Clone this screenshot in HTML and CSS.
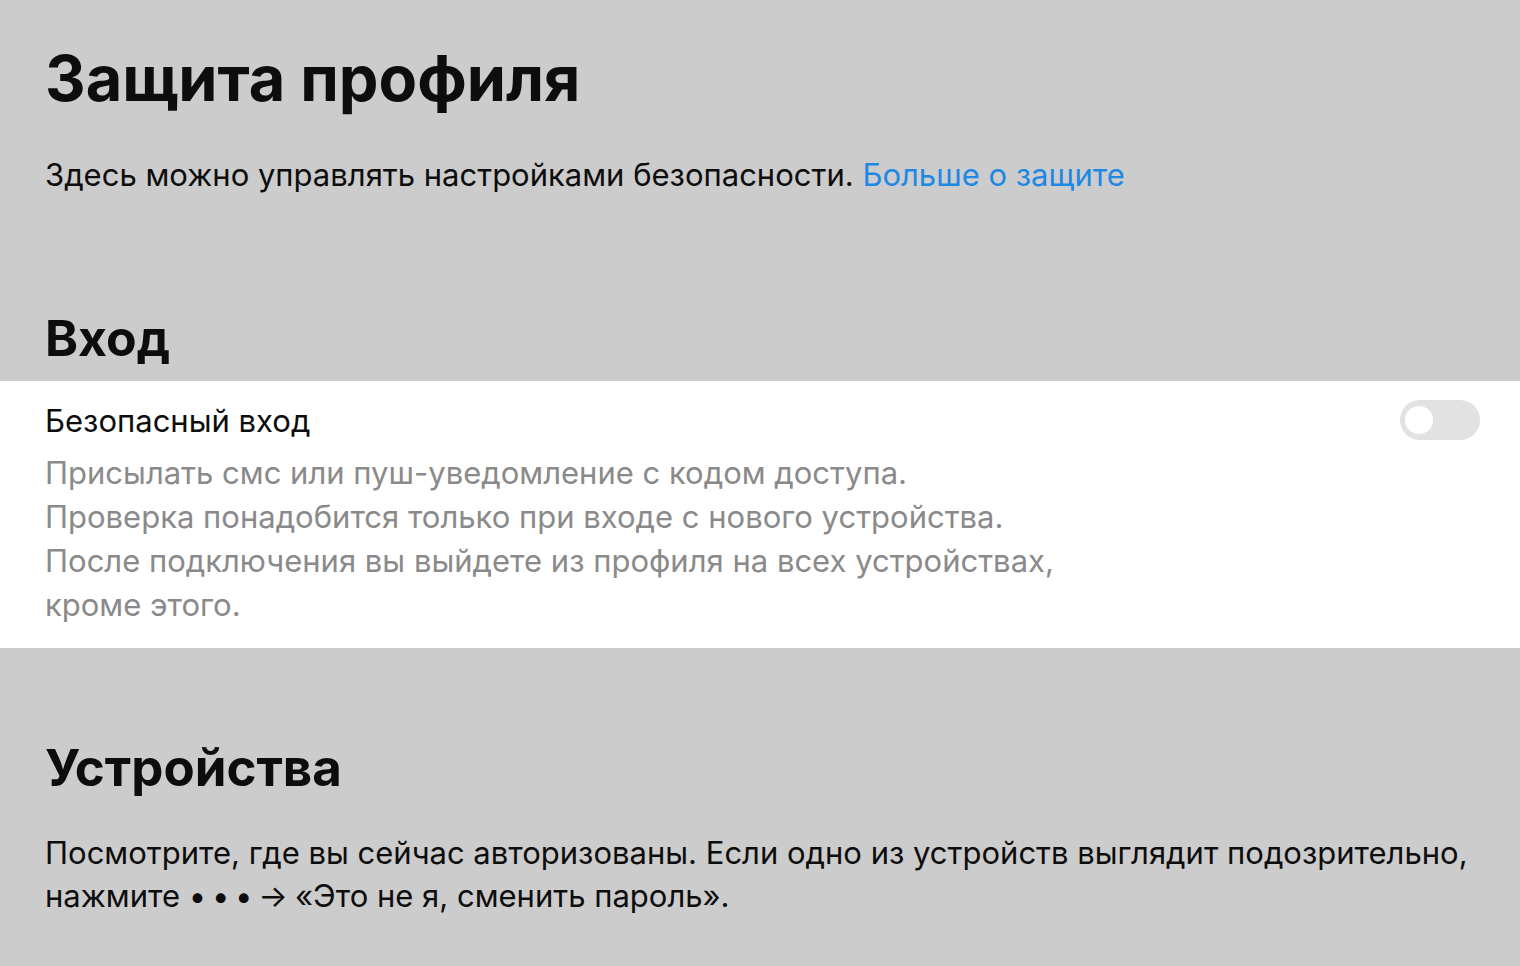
FILE: index.html
```html
<!DOCTYPE html>
<html lang="ru">
<head>
  <meta charset="UTF-8">
  <meta name="viewport" content="width=device-width, initial-scale=1.0">
  <title>Защита профиля</title>
  <link rel="stylesheet" href="styles.css">
</head>
<body>
  <div class="intro">
    <h1>Защита профиля</h1>
    <p>Здесь можно управлять настройками безопасности. <a href="#">Больше о защите</a></p>
  </div>

  <h2 class="section-title">Вход</h2>
  <div class="setting">
    <div class="setting-text">
      <div class="setting-name">Безопасный вход</div>
      <div class="setting-desc">Присылать смс или пуш-уведомление с кодом доступа.<br>Проверка понадобится только при входе с нового устройства.<br>После подключения вы выйдете из профиля на всех устройствах,<br>кроме этого.</div>
    </div>
    <div class="toggle"><span class="knob"></span></div>
  </div>

  <h2 class="section-title devices">Устройства</h2>
  <p class="devices-text">Посмотрите, где вы сейчас авторизованы. Если одно из устройств выглядит подозрительно,<br>нажмите <span class="dots">• • • →</span> «Это не я, сменить пароль».</p>
</body>
</html>
```

FILE: styles.css
```css
body {
  margin: 0;
  background: #cccccc;
  color: #0d0d0d;
  font-family: 'Inter', 'Noto Sans', sans-serif;
}
.intro {
  padding: 38px 40px 0 45px;
}
h1 {
  font-size: 63px;
  font-weight: 700;
  margin: 0;
  line-height: 80px;
}
.intro p {
  font-size: 31px;
  margin: 37px 0 0;
  line-height: 40px;
}
.intro a {
  color: #1e88e5;
  text-decoration: none;
}
.section-title {
  font-size: 50px;
  font-weight: 700;
  margin: 0;
  padding: 113px 45px 13px;
  line-height: 60px;
}
.setting {
  background: #fff;
  display: flex;
  justify-content: space-between;
  align-items: flex-start;
  padding: 19px 40px 21px 45px;
}
.setting-name {
  font-size: 31px;
  line-height: 42px;
}
.setting-desc {
  font-size: 31px;
  line-height: 44px;
  color: #8a8a8a;
  margin-top: 9px;
}
.toggle {
  width: 80px;
  height: 40px;
  border-radius: 20px;
  background: #e2e2e2;
  display: flex;
  align-items: center;
  padding: 0 5px;
  box-sizing: border-box;
}
.knob {
  width: 28px;
  height: 28px;
  border-radius: 50%;
  background: #fff;
}
.section-title.devices {
  font-size: 51px;
  padding-top: 90px;
  padding-bottom: 0;
}
.devices-text {
  font-size: 31px;
  line-height: 43px;
  margin: 33px 0 0;
  padding: 0 40px 0 45px;
}
.dots {
  letter-spacing: -1.5px;
}
```
